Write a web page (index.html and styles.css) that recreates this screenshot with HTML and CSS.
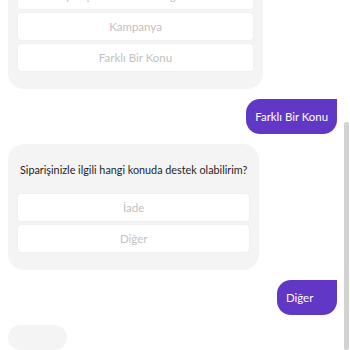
FILE: index.html
```html
<!DOCTYPE html>
<html lang="tr">
<head>
    <meta charset="UTF-8">
    <meta name="viewport" content="width=device-width, initial-scale=1.0">
    <title>Destek</title>
    <link rel="stylesheet" href="styles.css">
</head>
<body>
    <div class="page">
        <div class="chat">
            <div class="bot-msg first">
                <p class="question">Siparişinizle ilgili hangi konuda destek olabilirim?</p>
                <div class="options">
                    <button class="option">Sipariş Durumu ve Kargo Takibi</button>
                    <button class="option">Kampanya</button>
                    <button class="option">Farklı Bir Konu</button>
                </div>
            </div>
            <div class="user-msg">Farklı Bir Konu</div>
            <div class="bot-msg">
                <p class="question">Siparişinizle ilgili hangi konuda destek olabilirim?</p>
                <div class="options">
                    <button class="option">İade</button>
                    <button class="option">Diğer</button>
                </div>
            </div>
            <div class="user-msg">Diğer</div>
            <div class="bot-msg typing"></div>
        </div>
        <div class="scrollbar">
            <div class="thumb"></div>
        </div>
    </div>
</body>
</html>
```

FILE: styles.css
```css
body {
    margin: 0;
    padding: 0;
    background: #ffffff;
    font-family: Lato, "Noto Sans", Arial, sans-serif;
    overflow: hidden;
}
.page {
    display: flex;
    height: 350px;
    overflow: hidden;
}
.chat {
    flex: 1;
    display: flex;
    flex-direction: column;
    align-items: flex-start;
    gap: 10px;
    padding: 0 0 0 8px;
    margin-top: -68px;
}
.bot-msg {
    background: #f4f4f4;
    border-radius: 16px;
    padding: 18px 9px 17px;
}
.bot-msg.first {
    width: 237px;
}
.question {
    margin: 0 3px 15px;
    font-size: 10.8px;
    line-height: 16px;
    color: #1e1e1e;
    white-space: nowrap;
}
.options {
    display: flex;
    flex-direction: column;
    gap: 2px;
}
.option {
    height: 29px;
    border: 1px solid #f0f0f0;
    border-radius: 4px;
    background: #ffffff;
    color: #c2c2c2;
    font-family: inherit;
    font-size: 11.5px;
    cursor: pointer;
}
.user-msg {
    align-self: flex-end;
    min-width: 60px;
    box-sizing: border-box;
    height: 35px;
    line-height: 35px;
    padding: 0 9px;
    background: #6138c6;
    color: #fff;
    font-size: 11.4px;
    border-radius: 14px 0 14px 14px;
}
.typing {
    width: 59px;
    height: 40px;
    padding: 0;
}
.scrollbar {
    width: 13px;
    display: flex;
    justify-content: flex-end;
}
.thumb {
    width: 5px;
    margin: 122px 1px 0 0;
    background: #d2d2d2;
    border-radius: 2px;
}
```
